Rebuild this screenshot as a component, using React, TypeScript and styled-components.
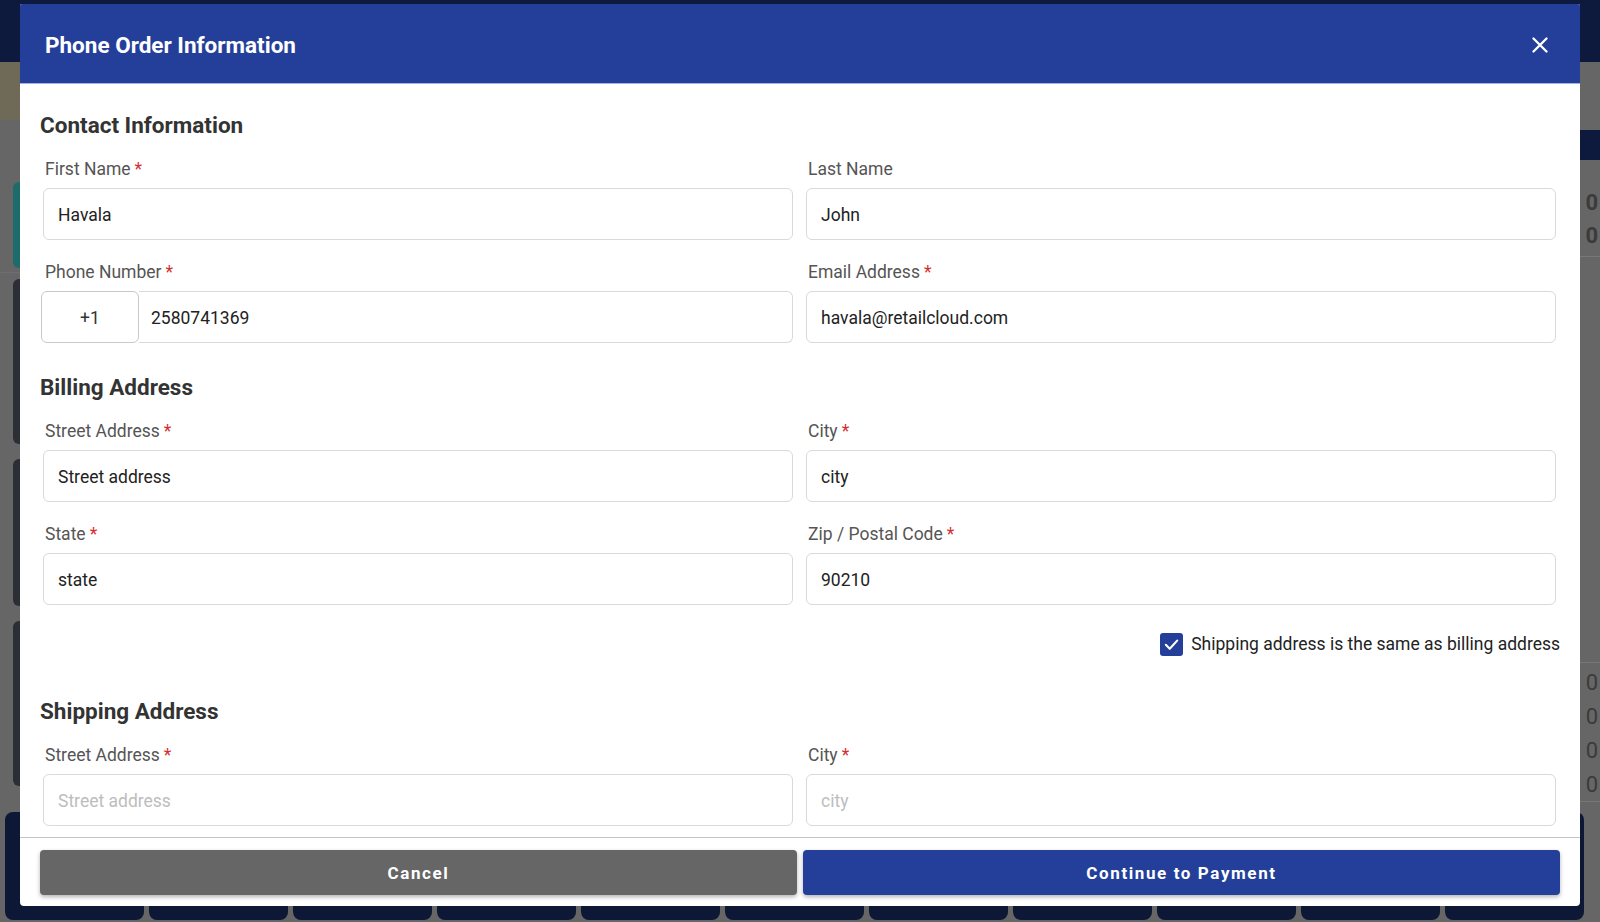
import React from 'react';
import styled, { createGlobalStyle } from 'styled-components';

const GlobalStyle = createGlobalStyle`
	html, body {
		margin: 0;
		padding: 0;
		width: 1600px;
		height: 922px;
		overflow: hidden;
		font-family: Roboto, 'Noto Sans', Arial, sans-serif;
	}
	* {
		box-sizing: border-box;
	}
`;

// ---- dimmed app behind the dialog ----

const Shell = styled.div`
	position: relative;
	width: 1600px;
	height: 922px;
	display: flex;
	flex-direction: column;
	background: #cccccc;
	overflow: hidden;
`;

const TopBar = styled.div`
	height: 62px;
	background: #1a347c;
	flex-shrink: 0;
`;

const Main = styled.div`
	flex: 1;
	display: flex;
	min-height: 0;
`;

const LeftColumn = styled.div`
	width: 330px;
	display: flex;
	flex-direction: column;
`;

const InfoBand = styled.div`
	height: 58px;
	background: #ded4b0;
`;

const CustomerArea = styled.div`
	height: 153px;
	padding: 62px 0 5px 13px;
	border-bottom: 1px solid #dddddd;
	display: flex;
`;

const OrderList = styled.div`
	flex: 1;
	display: flex;
	flex-direction: column;
	gap: 15px;
	padding: 6px 0 0 13px;
`;

const OrderCard = styled.div<{ $tone: string; $h: number }>`
	height: ${(p) => p.$h}px;
	flex-shrink: 0;
	width: 100%;
	border-radius: 6px;
	background: ${(p) => p.$tone};
`;

const RightPanel = styled.div`
	flex: 1;
	display: flex;
	flex-direction: column;
	align-items: flex-end;
`;

const PanelButton = styled.div`
	margin-top: 68px;
	width: 60px;
	height: 30px;
	border-radius: 4px 0 0 4px;
	background: #1a347c;
`;

const TotalsBlock = styled.div`
	display: flex;
	flex-direction: column;
	align-items: flex-end;
	gap: 9px;
	margin-top: 31px;
	padding: 0 2px 8px 0;
	color: #777777;
	font-size: 22px;
	line-height: 24px;
	font-weight: 700;
	border-bottom: 1px solid #eeeeee;
	width: 100%;
`;

const Filler = styled.div`
	flex: 1;
`;

const Digits = styled.div`
	display: flex;
	flex-direction: column;
	align-items: flex-end;
	gap: 10px;
	width: 100%;
	padding: 8px 2px 4px 0;
	color: #777777;
	font-size: 22px;
	line-height: 24px;
	border-top: 1px solid #eeeeee;
	border-bottom: 1px solid #eeeeee;
	margin-bottom: 10px;
`;

const TileRow = styled.div`
	height: 110px;
	display: flex;
	gap: 5px;
	padding: 0 0 0 5px;
	flex-shrink: 0;
`;

const Tile = styled.div`
	width: 139px;
	height: 108px;
	border-radius: 8px;
	background: #18306c;
	flex-shrink: 0;
`;

const Dim = styled.div`
	position: absolute;
	inset: 0;
	background: rgba(0, 0, 0, 0.5);
`;

// ---- dialog ----

const Overlay = styled.div`
	position: absolute;
	inset: 0;
	padding: 4px 20px 16px 20px;
	display: flex;
`;

const Dialog = styled.div`
	flex: 1;
	display: flex;
	flex-direction: column;
	background: #ffffff;
	border-radius: 2px 2px 4px 4px;
	overflow: hidden;
`;

const Header = styled.div`
	height: 80px;
	flex-shrink: 0;
	background: #233f9a;
	display: flex;
	align-items: center;
	justify-content: space-between;
	padding: 2px 32px 0 25px;
	border-bottom: 1px solid #9db4e4;
`;

const Title = styled.h2`
	margin: 0;
	color: #ffffff;
	font-size: 22.5px;
	font-weight: 700;
`;

const CloseButton = styled.button`
	border: 0;
	background: none;
	padding: 0;
	width: 16px;
	height: 16px;
	display: flex;
	cursor: pointer;
`;

const Body = styled.div`
	flex: 1;
	min-height: 0;
	overflow: hidden;
	padding: 27px 20px 0 20px;
`;

const SectionTitle = styled.h3<{ $top?: number }>`
	margin: ${(p) => p.$top ?? 0}px 0 18px 0;
	height: 28px;
	line-height: 28px;
	font-size: 22.5px;
	font-weight: 700;
	color: #333333;
`;

const FieldGrid = styled.div`
	display: grid;
	grid-template-columns: 1fr 1fr;
	column-gap: 13px;
	row-gap: 20px;
	padding: 0 4px 0 3px;
`;

const Field = styled.div`
	display: flex;
	flex-direction: column;
	gap: 9px;
`;

const Label = styled.label`
	padding-left: 2px;
	height: 22px;
	line-height: 24px;
	font-size: 17.5px;
	color: #555555;
`;

const Required = styled.span`
	color: #d32f2f;
	margin-left: 4px;
`;

const TextInput = styled.input`
	height: 52px;
	width: 100%;
	border: 1px solid #d9d9d9;
	border-radius: 6px;
	padding: 2px 14px 0 14px;
	font-family: inherit;
	font-size: 17.5px;
	color: #222222;
	background: #ffffff;
	outline: none;

	&::placeholder {
		color: #bdbdbd;
	}
`;

const PhoneGroup = styled.div`
	display: flex;
	height: 52px;
	margin-left: -2px;
`;

const CodeBox = styled.div`
	width: 98px;
	flex-shrink: 0;
	border: 1px solid #c9c9c9;
	border-radius: 6px;
	display: flex;
	align-items: center;
	justify-content: center;
	padding-top: 2px;
	font-size: 17.5px;
	color: #333333;
`;

const PhoneInput = styled(TextInput)`
	flex: 1;
	border-left: 0;
	border-radius: 0 6px 6px 0;
	padding-left: 12px;
`;

const SameRow = styled.label`
	margin-top: 27px;
	height: 24px;
	display: flex;
	justify-content: flex-end;
	align-items: center;
	gap: 8px;
	font-size: 17.5px;
	color: #222222;
`;

const CheckBox = styled.span`
	width: 23px;
	height: 23px;
	border-radius: 3px;
	background: #233f9a;
	display: flex;
	align-items: center;
	justify-content: center;
`;

const Footer = styled.div`
	flex-shrink: 0;
	border-top: 1px solid #c4c4c4;
	padding: 12px 20px 11px 20px;
	display: grid;
	grid-template-columns: 1fr 1fr;
	gap: 6px;
`;

const ActionButton = styled.button<{ $primary?: boolean }>`
	height: 45px;
	border: 0;
	border-radius: 4px;
	background: ${(p) => (p.$primary ? '#233f9a' : '#666666')};
	color: #ffffff;
	font-family: inherit;
	font-size: 17px;
	font-weight: 700;
	letter-spacing: 1.6px;
	box-shadow: 0 2px 4px rgba(0, 0, 0, 0.3);
	cursor: pointer;
`;

type FieldDef = {
	label: string;
	value?: string;
	placeholder?: string;
	required?: boolean;
};

function FormField({ label, value, placeholder, required }: FieldDef) {
	return (
		<Field>
			<Label>
				{label}
				{required && <Required>*</Required>}
			</Label>
			<TextInput defaultValue={value} placeholder={placeholder} />
		</Field>
	);
}

function BackgroundApp() {
	return (
		<>
			<TopBar />
			<Main>
				<LeftColumn>
					<InfoBand />
					<CustomerArea>
						<OrderCard $tone="#3ad6d4" $h={86} />
					</CustomerArea>
					<OrderList>
						<OrderCard $tone="#585c6a" $h={165} />
						<OrderCard $tone="#585c6a" $h={147} />
						<OrderCard $tone="#585c6a" $h={165} />
					</OrderList>
				</LeftColumn>
				<RightPanel>
					<PanelButton />
					<TotalsBlock>
						<span>0</span>
						<span>0</span>
					</TotalsBlock>
					<Filler />
					<Digits>
						<span>0</span>
						<span>0</span>
						<span>0</span>
						<span>0</span>
					</Digits>
				</RightPanel>
			</Main>
			<TileRow>
				{Array.from({ length: 11 }).map((_, i) => (
					<Tile key={i} />
				))}
			</TileRow>
			<Dim />
		</>
	);
}

function App() {
	return (
		<Shell>
			<GlobalStyle />
			<BackgroundApp />
			<Overlay>
				<Dialog>
					<Header>
						<Title>Phone Order Information</Title>
						<CloseButton aria-label="Close">
							<svg width="16" height="16" viewBox="0 0 16 16">
								<path d="M1.5 1.5 14.5 14.5M14.5 1.5 1.5 14.5" stroke="#ffffff" strokeWidth="2.3" strokeLinecap="round" />
							</svg>
						</CloseButton>
					</Header>
					<Body>
						<SectionTitle>Contact Information</SectionTitle>
						<FieldGrid>
							<FormField label="First Name" value="Havala" required />
							<FormField label="Last Name" value="John" />
							<Field>
								<Label>
									Phone Number<Required>*</Required>
								</Label>
								<PhoneGroup>
									<CodeBox>+1</CodeBox>
									<PhoneInput defaultValue="2580741369" />
								</PhoneGroup>
							</Field>
							<FormField label="Email Address" value="havala@retailcloud.com" required />
						</FieldGrid>

						<SectionTitle $top={30}>Billing Address</SectionTitle>
						<FieldGrid>
							<FormField label="Street Address" value="Street address" required />
							<FormField label="City" value="city" required />
							<FormField label="State" value="state" required />
							<FormField label="Zip / Postal Code" value="90210" required />
						</FieldGrid>

						<SameRow>
							<CheckBox>
								<svg width="17" height="17" viewBox="0 0 24 24">
									<path d="M4 12.5 9.5 18 20 6.5" fill="none" stroke="#ffffff" strokeWidth="3" strokeLinecap="round" strokeLinejoin="round" />
								</svg>
							</CheckBox>
							Shipping address is the same as billing address
						</SameRow>

						<SectionTitle $top={41}>Shipping Address</SectionTitle>
						<FieldGrid>
							<FormField label="Street Address" placeholder="Street address" required />
							<FormField label="City" placeholder="city" required />
						</FieldGrid>
					</Body>
					<Footer>
						<ActionButton>Cancel</ActionButton>
						<ActionButton $primary>Continue to Payment</ActionButton>
					</Footer>
				</Dialog>
			</Overlay>
		</Shell>
	);
}

export default App;
